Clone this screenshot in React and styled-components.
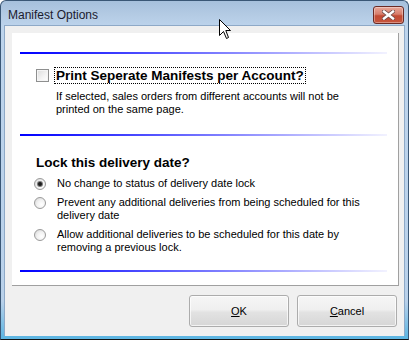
import React from "react";
import styled, { createGlobalStyle } from "styled-components";

const GlobalStyle = createGlobalStyle`
  html, body {
    margin: 0;
    padding: 0;
    background: #ffffff;
  }
  body {
    font-family: "Liberation Sans", Arial, sans-serif;
  }
`;

const Window = styled.div`
  position: relative;
  width: 409px;
  height: 340px;
  box-sizing: border-box;
  display: flex;
  flex-direction: column;
  border: 1px solid #3a5776;
  border-bottom-color: #111;
  border-radius: 6px 6px 0 0;
  background: linear-gradient(#a6c0dc 0px, #b4cbe4 14px, #bdd4ec 26px, #b9d1ea 300px, #5fb6e2 336px);
  overflow: hidden;
`;

const TitleBar = styled.div`
  height: 25px;
  display: flex;
  align-items: center;
  justify-content: space-between;
  padding: 0 4px 0 7px;
`;

const Title = styled.span`
  font-family: "Liberation Sans", Arial, sans-serif;
  font-size: 12px;
  color: #1b1b2e;
  margin-top: 3px;
`;

const CloseButton = styled.div`
  width: 29px;
  height: 16px;
  margin-top: 3px;
  border: 1px solid #6b2a24;
  border-radius: 3px;
  background: linear-gradient(#e8a799 0%, #d77e6c 45%, #c24a33 55%, #c6553d 100%);
  box-shadow: inset 0 0 0 1px rgba(255, 255, 255, 0.35);
  display: flex;
  align-items: center;
  justify-content: center;
`;

const Client = styled.div`
  flex: 1;
  margin: 0 3px 3px 3px;
  background: #f0f0f0;
  border: 1px solid #8ea9c7;
  border-bottom: none;
  display: flex;
  flex-direction: column;
  padding: 7px 5px 9px 7px;
`;

const Panel = styled.div`
  height: 253px;
  box-sizing: border-box;
  background: #ffffff;
  border-right: 1px solid #a0a0a0;
  border-bottom: 1px solid #a0a0a0;
  padding: 19px 11px 0 8px;
  display: flex;
  flex-direction: column;
`;

const Rule = styled.div`
  height: 2px;
  flex: none;
  margin-top: ${({ $gap }) => $gap || 0}px;
  background: linear-gradient(to right, #0000ff 0%, #1a1aff 12%, #8080ff 55%, #f2f2ff 100%);
`;

const CheckRow = styled.div`
  display: flex;
  align-items: center;
  margin: 14px 0 0 16px;
`;

const CheckBox = styled.span`
  width: 13px;
  height: 13px;
  box-sizing: border-box;
  border: 1px solid #8e8f8f;
  background: linear-gradient(135deg, #dcdcdc 0%, #f4f4f4 60%, #ffffff 100%);
  box-shadow: inset 0 0 0 1px #f5f5f5;
  flex: none;
`;

const BoldLabel = styled.span`
  font-size: 13.5px;
  font-weight: bold;
  line-height: 13px;
  color: #000;
  margin-left: 6px;
  padding: 0 1px;
  outline: 1px dotted #000;
  outline-offset: 0;
  border-top: 1px solid transparent;
  border-bottom: 1px solid transparent;
`;

const Hint = styled.p`
  margin: 7px 0 0 36px;
  font-size: 11px;
  line-height: 13px;
  color: #000;
`;

const Heading = styled.h3`
  margin: 19px 0 0 16px;
  font-size: 13.5px;
  font-weight: bold;
  line-height: 16px;
  color: #000;
`;

const RadioList = styled.div`
  display: flex;
  flex-direction: column;
  gap: 6px;
  margin: 6px 0 0 14px;
`;

const RadioRow = styled.div`
  display: flex;
  align-items: flex-start;
`;

const Radio = styled.span`
  width: 12px;
  height: 12px;
  margin-top: 1px;
  box-sizing: border-box;
  border-radius: 50%;
  border: 1px solid #9a9a9a;
  background: radial-gradient(circle at 65% 65%, #ffffff 0%, #f2f2f2 45%, #d2d2d2 100%);
  display: flex;
  align-items: center;
  justify-content: center;
  flex: none;

  &::after {
    content: "";
    width: 4px;
    height: 4px;
    border-radius: 50%;
    background: #1c1c1c;
    box-shadow: 0 0 0 1px #7a7a7a;
    display: ${({ $checked }) => ($checked ? "block" : "none")};
  }
`;

const RadioText = styled.span`
  margin-left: 11px;
  font-size: 11px;
  line-height: 13px;
  color: #000;
`;

const ButtonRow = styled.div`
  display: flex;
  justify-content: flex-end;
  gap: 8px;
  margin-top: 9px;
  padding-right: 2px;
`;

const Button = styled.button`
  width: 100px;
  height: 32px;
  border: 1px solid #acacac;
  border-radius: 3px;
  background: linear-gradient(#f6f6f6 0%, #efefef 45%, #e2e2e2 55%, #d6d6d6 100%);
  box-shadow: inset 0 0 0 1px rgba(255, 255, 255, 0.7);
  font-family: "Liberation Sans", Arial, sans-serif;
  font-size: 11px;
  color: #000;
  padding: 0;
`;

const Key = styled.span`
  text-decoration: underline;
`;

const Cursor = styled.svg`
  position: absolute;
  left: 218px;
  top: 18px;
`;

const options = [
  { text: "No change to status of delivery date lock", checked: true },
  {
    text: (
      <>
        Prevent any additional deliveries from being scheduled for this
        <br />
        delivery date
      </>
    ),
  },
  {
    text: (
      <>
        Allow additional deliveries to be scheduled for this date by
        <br />
        removing a previous lock.
      </>
    ),
  },
];

export default function App() {
  return (
    <>
      <GlobalStyle />
      <Window>
        <TitleBar>
          <Title>Manifest Options</Title>
          <CloseButton>
            <svg width="13" height="10" viewBox="0 0 13 10">
              <path d="M2 1.5 L11 8.5 M11 1.5 L2 8.5" stroke="#6e4b47" strokeWidth="4" strokeLinecap="square" />
              <path d="M2 1.5 L11 8.5 M11 1.5 L2 8.5" stroke="#ffffff" strokeWidth="2.4" strokeLinecap="square" />
            </svg>
          </CloseButton>
        </TitleBar>
        <Client>
          <Panel>
            <Rule />
            <CheckRow>
              <CheckBox />
              <BoldLabel>Print Seperate Manifests per Account?</BoldLabel>
            </CheckRow>
            <Hint>
              If selected, sales orders from different accounts will not be
              <br />
              printed on the same page.
            </Hint>
            <Rule $gap={18} />
            <Heading>Lock this delivery date?</Heading>
            <RadioList>
              {options.map((o, i) => (
                <RadioRow key={i}>
                  <Radio $checked={o.checked} />
                  <RadioText>{o.text}</RadioText>
                </RadioRow>
              ))}
            </RadioList>
            <Rule $gap={16} />
          </Panel>
          <ButtonRow>
            <Button>
              <Key>O</Key>K
            </Button>
            <Button>
              <Key>C</Key>ancel
            </Button>
          </ButtonRow>
        </Client>
        <Cursor width="13" height="21" viewBox="0 0 13 21">
          <path d="M0.5 0.5 L0.5 16.5 L4.5 12.5 L7.5 19.5 L9.5 18.5 L6.8 11.5 L11.5 11.5 Z" fill="#ffffff" stroke="#000" strokeWidth="1" strokeLinejoin="round" />
        </Cursor>
      </Window>
    </>
  );
}
